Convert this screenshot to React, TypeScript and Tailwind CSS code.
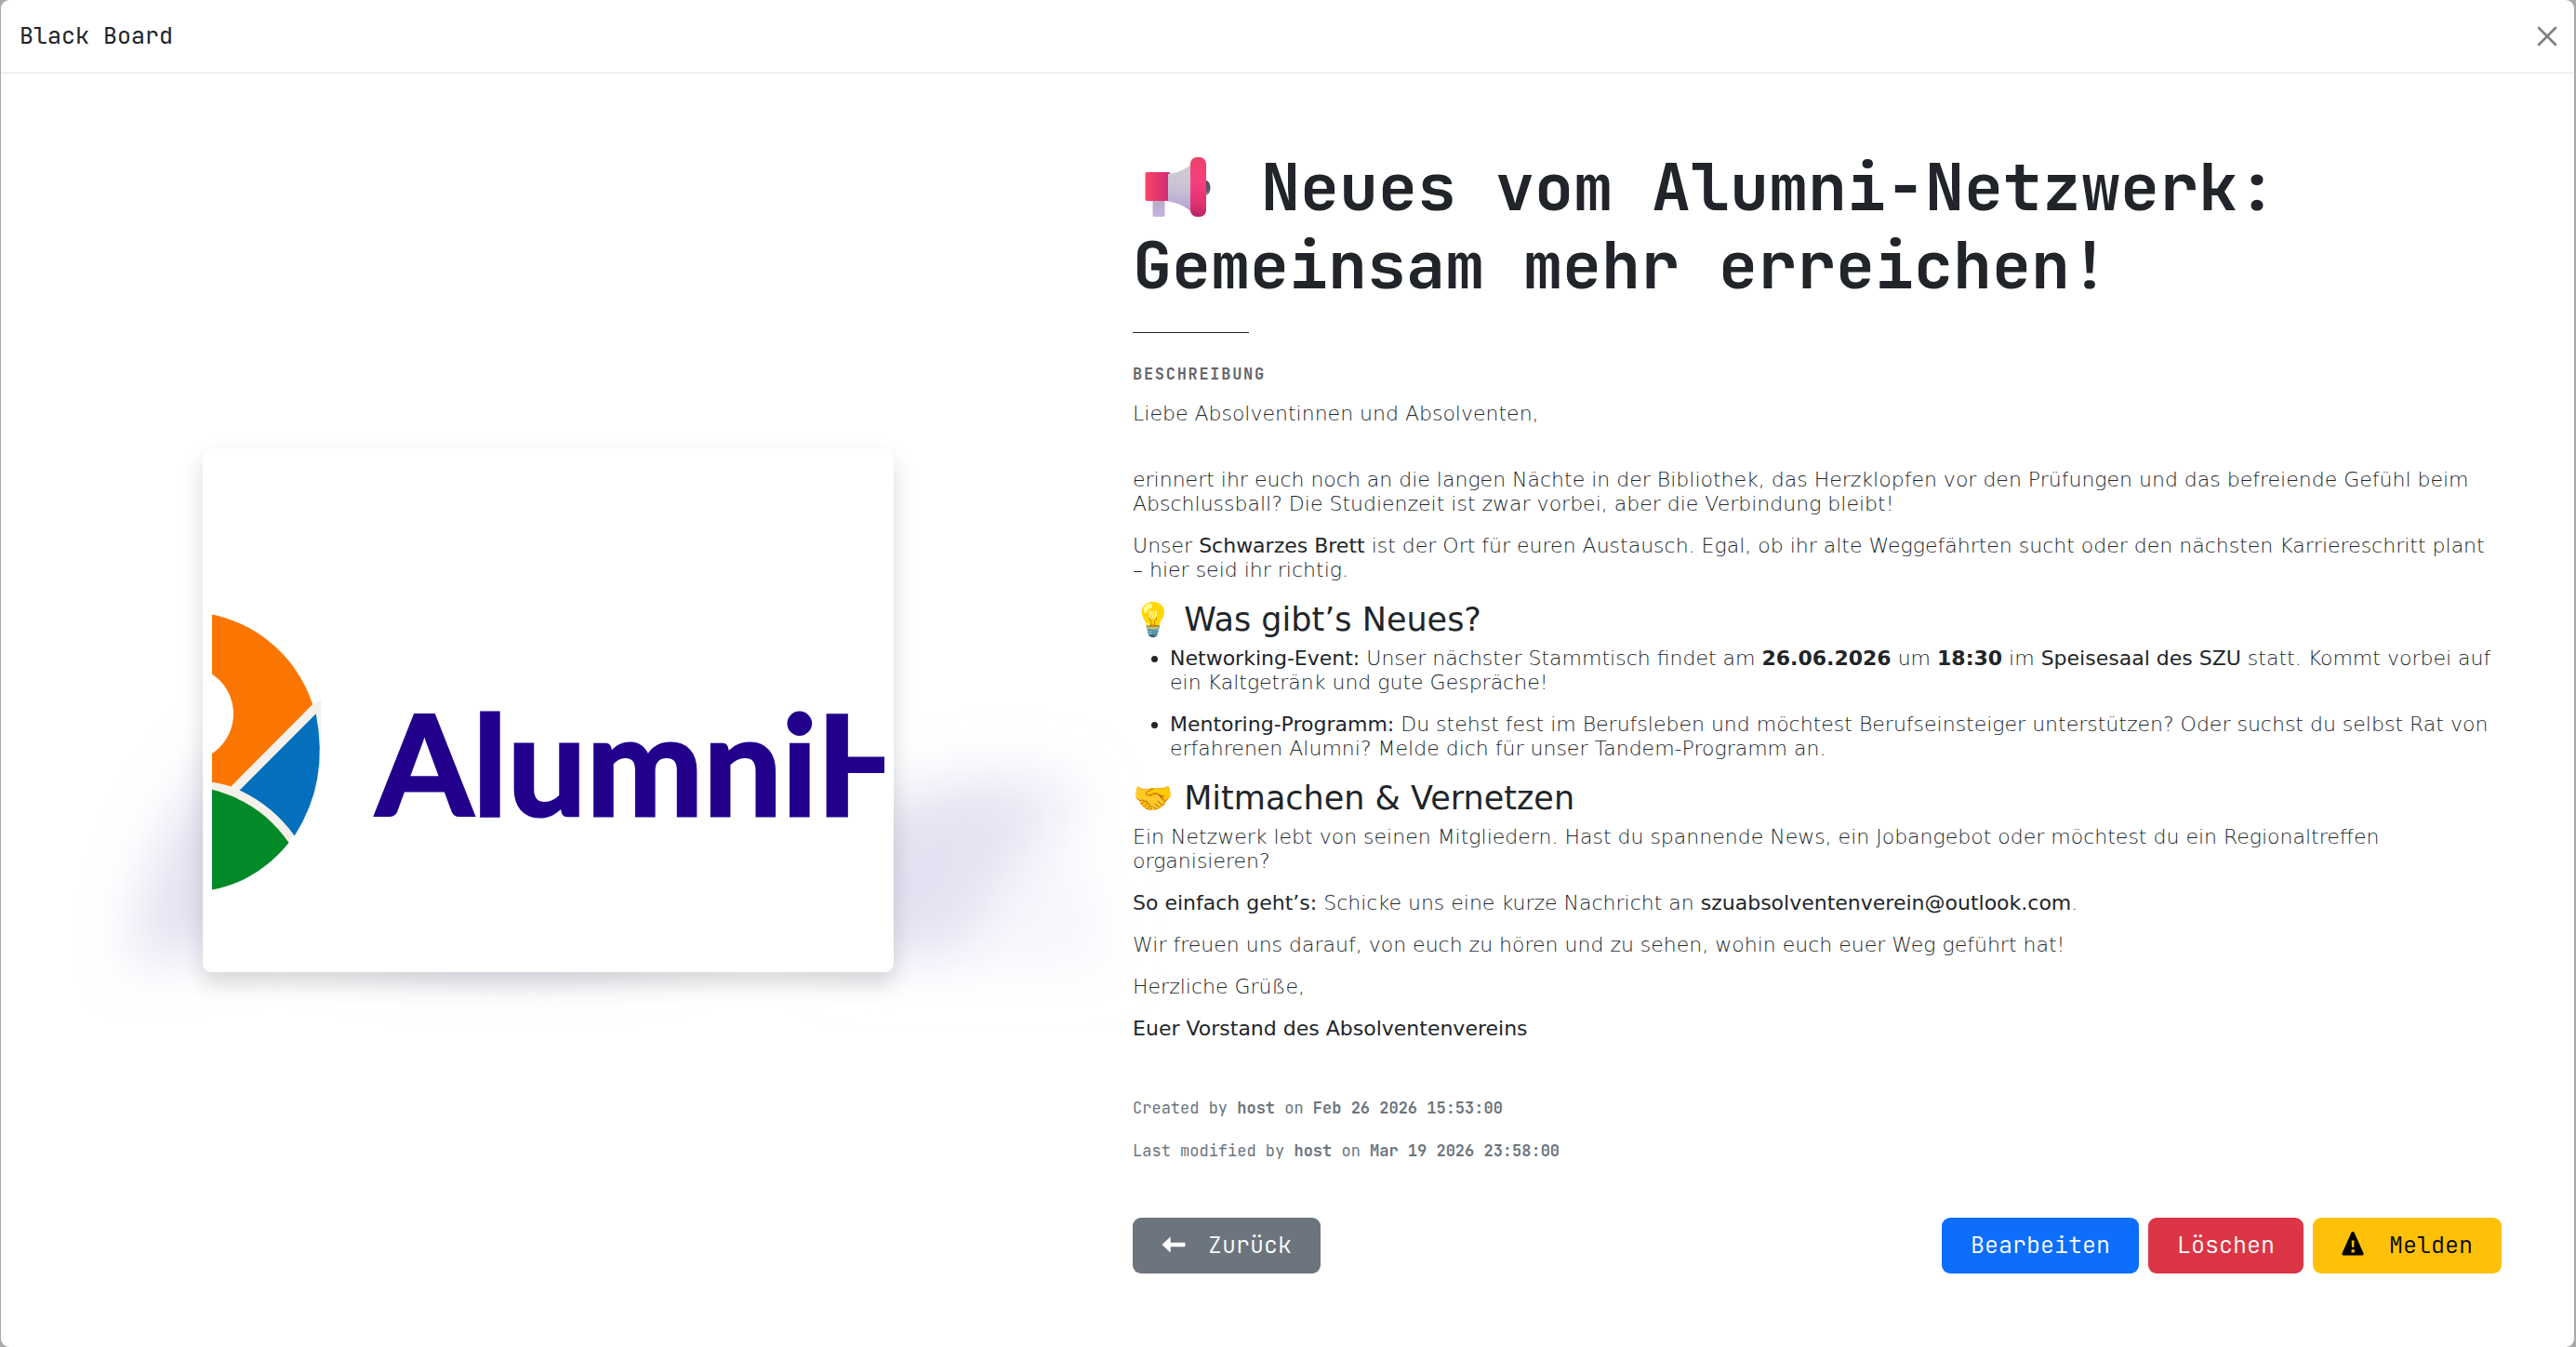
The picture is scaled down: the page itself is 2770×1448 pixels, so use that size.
import type { ReactNode } from "react";

function Strong({ children }: { children: ReactNode }) {
  return <strong className="font-normal">{children}</strong>;
}

function CloseIcon() {
  return (
    <svg viewBox="0 0 22 22" className="size-[22px]" aria-hidden="true">
      <path d="M2 2L20 20M20 2L2 20" stroke="#7f7f7f" strokeWidth="2.6" strokeLinecap="round" />
    </svg>
  );
}

function Megaphone() {
  return (
    <svg viewBox="0 0 96 64" className="inline-block h-16 w-24 align-[-7px]" role="img" aria-label="Megafon">
      <defs>
        <linearGradient id="box" x1="0" x2="1">
          <stop offset="0" stopColor="#fa4468" />
          <stop offset="1" stopColor="#cf2a72" />
        </linearGradient>
        <linearGradient id="cone" x1="0" x2="0" y1="0" y2="1">
          <stop offset="0" stopColor="#cfcdd2" />
          <stop offset="0.5" stopColor="#c8c3d3" />
          <stop offset="1" stopColor="#b4a0d6" />
        </linearGradient>
        <linearGradient id="grip" x1="0" x2="0" y1="0" y2="1">
          <stop offset="0" stopColor="#b7abc4" />
          <stop offset="1" stopColor="#c3b3e0" />
        </linearGradient>
        <linearGradient id="ring" x1="0" x2="0" y1="0" y2="1">
          <stop offset="0" stopColor="#ee4166" />
          <stop offset="0.4" stopColor="#f83f80" />
          <stop offset="0.8" stopColor="#e0316f" />
          <stop offset="1" stopColor="#b52463" />
        </linearGradient>
        <linearGradient id="knob" x1="0" x2="0" y1="0" y2="1">
          <stop offset="0" stopColor="#4a4753" />
          <stop offset="0.7" stopColor="#5d5a68" />
          <stop offset="1" stopColor="#a5a3ad" />
        </linearGradient>
      </defs>
      <rect x="21.500" y="44" width="13" height="20" rx="1.500" fill="url(#grip)" />
      <rect x="13.500" y="16" width="27" height="31" rx="2" fill="url(#box)" />
      <path d="M38 18C47 17 55 14 62.500 8V58C55 52 47 48.500 38 47.500Z" fill="url(#cone)" />
      <ellipse cx="78.500" cy="33" rx="5" ry="8" fill="url(#knob)" />
      <rect x="62" y="0" width="17" height="64" rx="7" fill="url(#ring)" />
    </svg>
  );
}

function ArrowLeftIcon() {
  return (
    <svg viewBox="0 0 26 26" className="h-[26px] w-[26px]" aria-hidden="true">
      <path d="M0.500 12L9 4Q9.700 3.500 9.700 4.500V9.800H24.500Q25.500 9.800 25.500 10.800V13.200Q25.500 14.200 24.500 14.200H9.700V19.500Q9.700 20.500 9 20Z" fill="currentColor" />
    </svg>
  );
}

function WarningIcon() {
  return (
    <svg viewBox="0 2 24 26" className="h-[26px] w-6 overflow-visible" aria-hidden="true">
      <path
        fillRule="evenodd"
        d="M10.500 0.800Q12 -0.600 13.500 0.800L23.600 23.400Q24 25.500 22 25.500H2Q0 25.500 0.400 23.400ZM10.700 9.500L11 16.700H13.300L13.600 9.500ZM10.500 19.200V22.400H13.800V19.200Z"
        fill="currentColor"
      />
    </svg>
  );
}

function Blob() {
  return (
    <svg viewBox="218 482 743 563" className="absolute inset-0 -z-10 h-full w-full overflow-visible" aria-hidden="true">
      <defs>
        <filter id="soft" x="-30%" y="-50%" width="160%" height="200%">
          <feGaussianBlur stdDeviation="28" />
        </filter>
      </defs>
      <g filter="url(#soft)">
        <path d="M900 880L1170 930L1190 1040H900Z" fill="#f8f6fd" />
        <path d="M940 860C1020 825 1120 815 1165 850C1160 900 1090 920 1060 980H940Z" fill="#efecf7" />
        <path
          d="M270 780C200 840 140 940 145 1040C220 1020 300 1000 400 1030C500 1045 600 1045 700 1030C780 1000 860 1010 960 1025C1020 1030 1050 1020 1060 960C1080 920 1110 890 1100 860C1060 845 980 860 900 890Z"
          fill="#e5e1f2"
        />
      </g>
    </svg>
  );
}

function AlumniLogo() {
  return (
    <svg viewBox="228 492 723 543" className="block w-full" role="img" aria-label="AlumniHub">
      <circle cx="193.500" cy="808" r="151.500" fill="#f4f1ea" />
      <path d="M193 656.500C262 656.500 317 698 336 757L248.600 845Q238 841 193 835Z" fill="#fb7600" />
      <circle cx="200" cy="767" r="51" fill="#fff" />
      <path d="M336 757L345 752V800H341L339.600 767L257.600 849L248.600 845Z" fill="#f4f1ea" />
      <path d="M339.600 767Q354 840 316.600 898Q294 866 257.600 849Z" fill="#0470bd" />
      <path d="M193 843C245 846 285 868 310.600 905.500C288 933 260 950 228 956H193Z" fill="#038a28" />
      <path d="M310.600 905.500L316.600 898L330 900L306 930L300 918Z" fill="#fff" />
      <text
        x="404"
        y="877"
        fontSize="150"
        fontWeight="700"
        fontFamily="Lato, sans-serif"
        fill="#22008c"
        stroke="#22008c"
        strokeWidth="3"
      >
        AlumniH
      </text>
    </svg>
  );
}

const buttonBase = "flex h-[60px] items-center rounded-[9px] px-[31px] text-[25px] font-light";

export default function App() {
  return (
    <div className="min-h-screen bg-[#a9a9a9] font-['JetBrains_Mono',monospace] text-[#212529]">
      <div role="dialog" aria-labelledby="dialog-title" className="mr-0.5 ml-px flex min-h-screen flex-col rounded-[9px] bg-white">
        <header className="flex h-[79px] items-center justify-between border-b border-[#dee2e6] pr-[18px] pl-5">
          <h2 id="dialog-title" className="text-[25px] font-normal">
            Black Board
          </h2>
          <button type="button" aria-label="Schließen">
            <CloseIcon />
          </button>
        </header>

        <main className="grid grow grid-cols-[9fr_13fr] items-center gap-[119px] pr-[78px] pl-[79px]">
          <div className="relative isolate mx-auto w-[73%]">
            <Blob />
            <div className="rounded-[9px] bg-white p-2.5 shadow-[0_12px_24px_rgba(0,0,0,0.15)]">
              <AlumniLogo />
            </div>
          </div>

          <article>
            <h1 className="text-[70px] leading-[84px] font-bold">
              <Megaphone /> Neues vom Alumni-Netzwerk: Gemeinsam mehr erreichen!
            </h1>
            <hr className="mt-[30px] mb-8 w-[125px] border-[#212529]" />
            <h2 className="mb-[17px] text-[17px] leading-[25px] font-semibold tracking-widest text-[#636669] uppercase">
              Beschreibung
            </h2>

            <div className="pr-1 font-['DejaVu_Sans',sans-serif] text-[22px] leading-[26px] font-extralight">
              <p className="mb-[19px]">
                Liebe Absolventinnen und Absolventen,
                <br />
                <br />
              </p>
              <p className="mb-[19px]">
                erinnert ihr euch noch an die langen Nächte in der Bibliothek, das Herzklopfen vor den Prüfungen und das
                befreiende Gefühl beim Abschlussball? Die Studienzeit ist zwar vorbei, aber die Verbindung bleibt!
              </p>
              <p className="mb-[19px]">
                Unser <Strong>Schwarzes Brett</Strong> ist der Ort für euren Austausch. Egal, ob ihr alte Weggefährten
                sucht oder den nächsten Karriereschritt plant – hier seid ihr richtig.
              </p>
              <h3 className="mb-2 text-[35px] leading-[42px] font-normal">💡 Was gibt’s Neues?</h3>
              <ul className="list-disc pl-10">
                <li className="marker:font-normal">
                  <p className="mb-[19px]">
                    <Strong>Networking-Event:</Strong> Unser nächster Stammtisch findet am{" "}
                    <strong className="font-bold">26.06.2026</strong> um <strong className="font-bold">18:30</strong> im{" "}
                    <Strong>Speisesaal des SZU</Strong> statt. Kommt vorbei auf ein Kaltgetränk und gute Gespräche!
                  </p>
                </li>
                <li className="marker:font-normal">
                  <p className="mb-[19px]">
                    <Strong>Mentoring-Programm:</Strong> Du stehst fest im Berufsleben und möchtest Berufseinsteiger
                    unterstützen? Oder suchst du selbst Rat von erfahrenen Alumni? Melde dich für unser Tandem-Programm
                    an.
                  </p>
                </li>
              </ul>
              <h3 className="mb-2 text-[35px] leading-[42px] font-normal">🤝 Mitmachen &amp; Vernetzen</h3>
              <p className="mb-[19px]">
                Ein Netzwerk lebt von seinen Mitgliedern. Hast du spannende News, ein Jobangebot oder möchtest du ein
                Regionaltreffen organisieren?
              </p>
              <p className="mb-[19px]">
                <Strong>So einfach geht’s:</Strong> Schicke uns eine kurze Nachricht an{" "}
                <Strong>szuabsolventenverein@outlook.com</Strong>.
              </p>
              <p className="mb-[19px]">
                Wir freuen uns darauf, von euch zu hören und zu sehen, wohin euch euer Weg geführt hat!
              </p>
              <p className="mb-[19px]">Herzliche Grüße,</p>
              <p>
                <Strong>Euer Vorstand des Absolventenvereins</Strong>
              </p>
            </div>

            <div className="mt-[59px] space-y-5 text-[17px] leading-[26px] text-[#6c757d]">
              <p>
                Created by <strong className="font-semibold">host</strong> on{" "}
                <strong className="font-semibold">Feb 26 2026 15:53:00</strong>
              </p>
              <p>
                Last modified by <strong className="font-semibold">host</strong> on{" "}
                <strong className="font-semibold">Mar 19 2026 23:58:00</strong>
              </p>
            </div>

            <div className="mt-[59px] flex items-center justify-between">
              <button type="button" className={`${buttonBase} gap-6 bg-[#6c757d] text-white`}>
                <ArrowLeftIcon />
                Zurück
              </button>
              <div className="flex gap-2.5">
                <button type="button" className={`${buttonBase} bg-[#0d6efd] text-white`}>
                  Bearbeiten
                </button>
                <button type="button" className={`${buttonBase} bg-[#dc3545] text-white`}>
                  Löschen
                </button>
                <button type="button" className={`${buttonBase} gap-[27px] bg-[#ffc107] text-black`}>
                  <WarningIcon />
                  Melden
                </button>
              </div>
            </div>
          </article>
        </main>
      </div>
    </div>
  );
}
